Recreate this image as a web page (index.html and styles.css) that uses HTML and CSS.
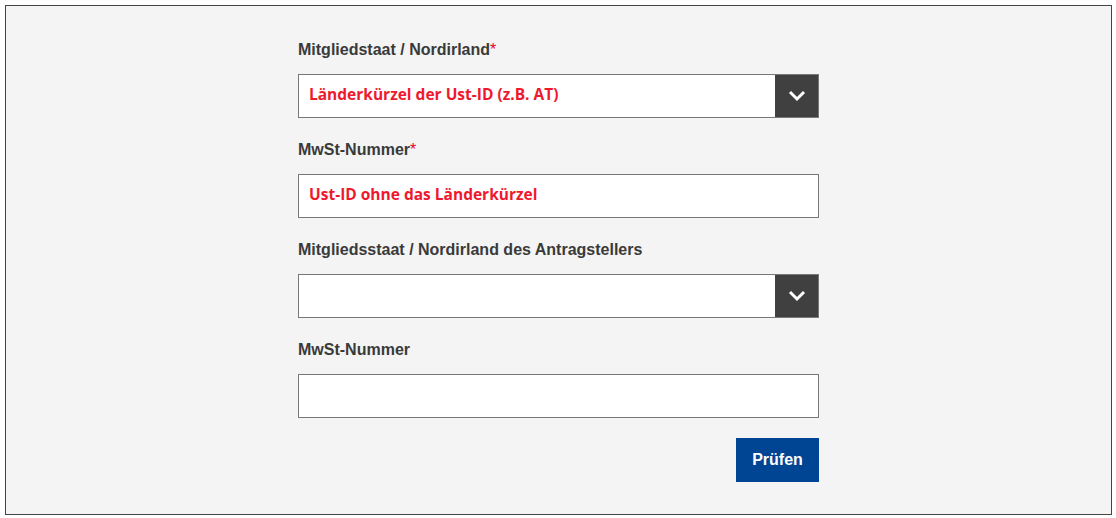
FILE: index.html
```html
<!DOCTYPE html>
<html lang="de">
<head>
  <meta charset="UTF-8" />
  <title>MwSt-Nummer prüfen</title>
  <link rel="stylesheet" href="styles.css">
</head>
<body>

  <div class="frame">
    <form class="vies-form">

      <div class="field">
        <label>Mitgliedstaat / Nordirland<span class="req">*</span></label>
        <div class="select-box">
          <span class="value">Länderkürzel der Ust-ID (z.B. AT)</span>
          <span class="arrow">
            <svg width="18" height="12" viewBox="0 0 18 12"><path d="M2 2 L9 9 L16 2" fill="none" stroke="#fff" stroke-width="3"/></svg>
          </span>
        </div>
      </div>

      <div class="field">
        <label>MwSt-Nummer<span class="req">*</span></label>
        <div class="text-box">
          <span class="value">Ust-ID ohne das Länderkürzel</span>
        </div>
      </div>

      <div class="field">
        <label>Mitgliedsstaat / Nordirland des Antragstellers</label>
        <div class="select-box">
          <span class="value"></span>
          <span class="arrow">
            <svg width="18" height="12" viewBox="0 0 18 12"><path d="M2 2 L9 9 L16 2" fill="none" stroke="#fff" stroke-width="3"/></svg>
          </span>
        </div>
      </div>

      <div class="field">
        <label>MwSt-Nummer</label>
        <div class="text-box">
          <span class="value"></span>
        </div>
      </div>

      <div class="actions">
        <button type="button">Prüfen</button>
      </div>

    </form>
  </div>

</body>
</html>
```

FILE: styles.css
```css
* {
  margin: 0;
  padding: 0;
  box-sizing: border-box;
}

body {
  font-family: 'Liberation Sans', Arial, sans-serif;
  background: #fff;
  padding: 5px 4px 3px 5px;
}

.frame {
  background: #f4f4f4;
  border: 1px solid #444;
  height: 510px;
  padding-top: 34px;
}

.vies-form {
  width: 521px;
  margin: 0 auto;
}

.field {
  margin-bottom: 22px;
}

.field label {
  display: block;
  font-size: 16px;
  font-weight: bold;
  line-height: 20px;
  color: #3a3a3a;
  margin-bottom: 14px;
}

.req {
  color: #e4002b;
  font-weight: normal;
}

.select-box,
.text-box {
  display: flex;
  height: 44px;
  background: #fff;
  border: 1px solid #777;
}

.value {
  flex: 1;
  padding: 0 10px 4px;
  display: flex;
  align-items: center;
  font-family: 'Open Sans', sans-serif;
  font-weight: 700;
  font-size: 15.5px;
  color: #f0182d;
}

.arrow {
  width: 43px;
  background: #404040;
  display: flex;
  align-items: center;
  justify-content: center;
}

.actions {
  display: flex;
  justify-content: flex-end;
  margin-top: -2px;
}

button {
  width: 83px;
  height: 44px;
  background: #004494;
  color: #fff;
  border: none;
  font-family: 'Liberation Sans', Arial, sans-serif;
  font-size: 16px;
  font-weight: bold;
}
```
